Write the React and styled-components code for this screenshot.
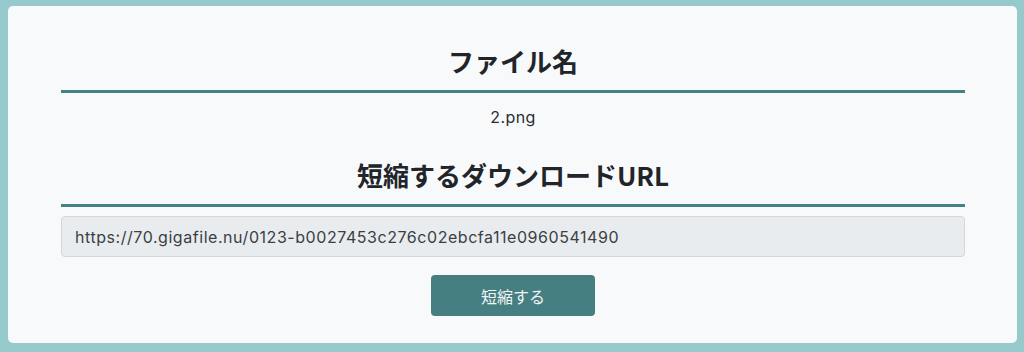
import React from "react";
import styled, { createGlobalStyle } from "styled-components";

const GlobalStyle = createGlobalStyle`
  html, body {
    margin: 0;
    padding: 0;
    background: #95c9cc;
  }
  body {
    font-family: Inter, "Noto Sans CJK JP", sans-serif;
    color: #212529;
  }
`;

const Page = styled.div`
  padding: 6px 7px 9px 8px;
  height: 352px;
  box-sizing: border-box;
`;

const Card = styled.main`
  background: #f8f9fa;
  border-radius: 5px;
  height: 100%;
  box-sizing: border-box;
  padding: 39px 52px 0 53px;
  display: flex;
  flex-direction: column;
  align-items: stretch;
`;

const Heading = styled.h2`
  margin: ${(p) => p.$top || 0}px 0 0;
  font-size: 26px;
  line-height: 31px;
  font-weight: 700;
  text-align: center;
  color: #212529;
  font-family: "Noto Sans CJK JP", "Liberation Sans", sans-serif;
`;

const Rule = styled.div`
  height: 3px;
  background: #468184;
  margin-top: 14px;
`;

const FileName = styled.p`
  margin: 12px 0 0;
  font-size: 16px;
  line-height: 24px;
  letter-spacing: 0.4px;
  text-align: center;
  color: #2a2e33;
`;

const UrlInput = styled.input`
  margin-top: 9px;
  height: 41px;
  box-sizing: border-box;
  border: 1px solid #d3d7dc;
  border-radius: 4px;
  background: #e9ecef;
  color: #3a3f44;
  padding: 0 13px;
  font-family: Inter, sans-serif;
  font-size: 16px;
  letter-spacing: 0.55px;
  outline: none;
`;

const Button = styled.button`
  align-self: center;
  margin-top: 18px;
  width: 164px;
  height: 41px;
  border: none;
  border-radius: 4px;
  background: #467f81;
  color: #f1f5f5;
  font-family: "Noto Sans CJK JP", sans-serif;
  font-size: 16px;
  cursor: pointer;
`;

export default function App() {
  return (
    <>
      <GlobalStyle />
      <Page>
        <Card>
          <Heading>ファイル名</Heading>
          <Rule />
          <FileName>2.png</FileName>
          <Heading $top={30}>短縮するダウンロードURL</Heading>
          <Rule />
          <UrlInput
            readOnly
            value="https://70.gigafile.nu/0123-b0027453c276c02ebcfa11e0960541490"
          />
          <Button>短縮する</Button>
        </Card>
      </Page>
    </>
  );
}
